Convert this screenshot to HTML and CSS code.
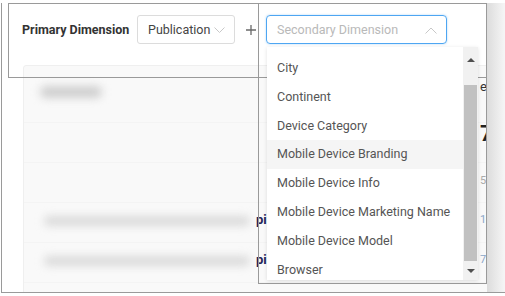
FILE: index.html
```html
<!DOCTYPE html>
<html>
<head>
<meta charset="utf-8">
<link rel="stylesheet" href="styles.css">
</head>
<body>
<div class="stage">
  <div class="page">
    <div class="card">
      <div class="card-head">
        <div class="blur blur-head"></div>
        <div class="val val-head">er</div>
      </div>
      <div class="card-row big">
        <div class="val val-big">7</div>
      </div>
      <div class="card-row sub">
        <div class="val val-sub">56</div>
      </div>
      <div class="card-row data">
        <div class="blur blur-row"></div>
        <span class="pub">pi</span>
        <div class="val val-blue">17</div>
      </div>
      <div class="card-row data">
        <div class="blur blur-row"></div>
        <span class="pub">pi</span>
        <div class="val val-blue">71</div>
      </div>
    </div>
    <div class="side-shadow"></div>
  </div>

  <div class="panel">
    <span class="label">Primary Dimension</span>
    <div class="select">
      <span>Publication</span>
      <svg class="chev" width="11" height="6" viewBox="0 0 11 6"><path d="M0.5 0.5 L5.5 5.5 L10.5 0.5" fill="none" stroke="#c8c8c8" stroke-width="1"/></svg>
    </div>
    <span class="plus"><svg width="10" height="10" viewBox="0 0 10 10"><path d="M5 0 V10 M0 5 H10" stroke="#6a6a6a" stroke-width="1.3"/></svg></span>
    <div class="select select-open">
      <span class="placeholder">Secondary Dimension</span>
      <svg class="chev" width="12" height="7" viewBox="0 0 12 7"><path d="M0.5 6.5 L6 1 L11.5 6.5" fill="none" stroke="#c8c8c8" stroke-width="1"/></svg>
    </div>
  </div>

  <div class="popframe"></div>

  <div class="dropdown">
    <ul class="list">
      <li>City</li>
      <li>Continent</li>
      <li>Device Category</li>
      <li class="hover">Mobile Device Branding</li>
      <li>Mobile Device Info</li>
      <li>Mobile Device Marketing Name</li>
      <li>Mobile Device Model</li>
      <li>Browser</li>
    </ul>
    <div class="scrollbar">
      <div class="arrow up"></div>
      <div class="track"><div class="thumb"></div></div>
      <div class="arrow down"></div>
    </div>
  </div>
</div>
</body>
</html>
```

FILE: styles.css
```css
* { box-sizing: border-box; }
html, body { margin: 0; padding: 0; background: #fff; }
body { font-family: Roboto, "Liberation Sans", Arial, sans-serif; font-size: 12.5px; color: #555; }

.stage { position: relative; width: 505px; height: 296px; overflow: hidden; }

.page {
  position: absolute;
  left: 1px; top: 3px;
  width: 504px; height: 290px;
  border-left: 1px solid #9a9a9a;
  border-bottom: 1px solid #9a9a9a;
  overflow: hidden;
}

.card {
  margin: 62px 0 0 21px;
  width: 470px;
  height: 260px;
  background: #f9f9f9;
  border: 1px solid #efefef;
  border-radius: 3px;
  display: flex;
  flex-direction: column;
}
.card-head { height: 57px; position: relative; border-bottom: 1px solid #f4f4f4; }
.card-row { position: relative; border-bottom: 1px solid #f4f4f4; }
.card-row.big { height: 40px; }
.card-row.sub { height: 40px; }
.card-row.data { height: 40px; }

.blur { position: absolute; background: #cfcfcf; filter: blur(4px); border-radius: 6px; }
.blur-head { left: 16px; top: 20px; width: 62px; height: 12px; }
.blur-row { left: 20px; top: 13px; width: 206px; height: 10px; background: #dadada; }

.val { position: absolute; left: 456px; white-space: nowrap; }
.val-head { top: 13px; color: #333; font-size: 13px; }
.val-big { top: -2px; font-size: 22px; font-weight: bold; color: #222; }
.val-sub { top: 11px; font-size: 11px; color: #aaa; }
.val-blue { top: 10px; font-size: 11px; color: #8aa6c8; }
.pub { position: absolute; left: 232px; top: 9px; font-weight: bold; color: #23235a; font-size: 13px; }

.side-shadow {
  position: absolute;
  right: 0; top: 0;
  width: 18px; height: 100%;
  background: linear-gradient(to right, #dcdcdc, #f6f6f6);
}

.panel {
  position: absolute;
  left: 8px; top: 3px;
  width: 479px; height: 75px;
  border: 1px solid #9a9a9a;
  display: flex;
  align-items: flex-start;
  padding: 11px 0 0 13px;
}
.label { font-weight: bold; color: #333; margin-top: 7px; width: 115px; white-space: nowrap; }
.select {
  display: flex; align-items: center; justify-content: space-between;
  height: 29px;
  border: 1px solid #dcdcdc;
  border-radius: 3px;
  padding: 0 9px 0 10px;
  color: #444;
  width: 98px;
}
.select .chev { margin-top: 1px; }
.plus { width: 31px; height: 29px; display: flex; align-items: center; justify-content: center; padding-left: 1px; }
.select-open {
  width: 181px;
  border: 1.5px solid #4ea6f2;
  border-radius: 4px;
  box-shadow: 0 0 2px rgba(78,166,242,0.5);
  padding: 0 9px 0 10px;
}
.placeholder { color: #b9b9b9; }

.popframe {
  position: absolute;
  left: 258px; top: 3px;
  width: 229px; height: 281px;
  border: 1px solid #9a9a9a;
}

.dropdown {
  position: absolute;
  left: 267px; top: 47px;
  width: 211px; height: 233px;
  background: #fff;
  box-shadow: 0 1px 4px rgba(0,0,0,0.12);
  display: flex;
  overflow: hidden;
}
.list { list-style: none; margin: 0; padding: 7px 0 0 0; flex: 1; }
.list li { height: 28.8px; line-height: 28.8px; padding-left: 10px; white-space: nowrap; color: #555; }
.list li.hover { background: #f5f5f5; }

.scrollbar {
  width: 15px; height: 100%;
  background: #f1f1f1;
  display: flex; flex-direction: column; align-items: center;
}
.arrow { width: 0; height: 0; border-left: 4px solid transparent; border-right: 4px solid transparent; }
.arrow.up { border-bottom: 4px solid #505050; margin: 11px 0 0 0; }
.arrow.down { border-top: 4px solid #505050; margin: 0 0 7px 0; }
.track { flex: 1; width: 100%; padding: 23px 1px 8px 1px; }
.thumb { width: 100%; height: 100%; background: #c1c1c1; }
```
